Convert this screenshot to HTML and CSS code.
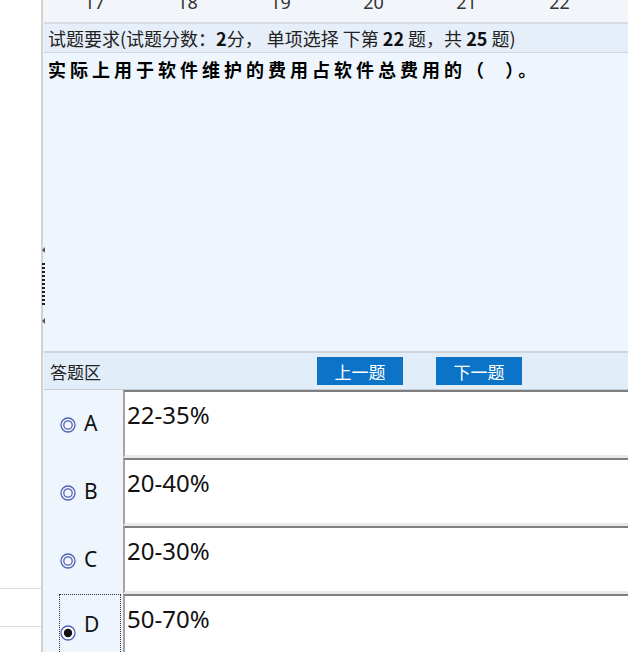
FILE: index.html
```html
<!DOCTYPE html>
<html>
<head>
<meta charset="utf-8">
<link rel="stylesheet" href="styles.css">
</head>
<body>
<div class="app">
  <div class="side">
    <div class="side-top"></div>
    <div class="side-row"></div>
    <div class="side-row"></div>
  </div>
  <div class="splitter">
    <span class="grip grip-up"></span>
    <span class="dots"></span>
    <span class="grip grip-down"></span>
  </div>
  <div class="main">
    <div class="nums">
      <span class="num">17</span><span class="num">18</span><span class="num">19</span><span class="num">20</span><span class="num">21</span><span class="num cur">22</span>
    </div>
    <div class="req">试题要求(试题分数：<b>2</b>分， 单项选择 下第 <b>22</b> 题，共 <b>25</b> 题)</div>
    <div class="question">实际上用于软件维护的费用占软件总费用的（&nbsp; ）。</div>
    <div class="ans-bar">
      <span class="ans-title">答题区</span>
      <button class="nav-btn">上一题</button>
      <button class="nav-btn">下一题</button>
    </div>
    <div class="options">
      <div class="opt">
        <div class="lab"><div class="lab-in">
          <svg class="radio" width="16" height="16" viewBox="0 0 16 16"><circle cx="8" cy="8" r="7" fill="#f4f6fc" stroke="#4f62b6" stroke-width="1.3"/><circle cx="8" cy="8" r="4.2" fill="none" stroke="#4f62b6" stroke-width="1.3"/></svg>
          <span class="letter">A</span></div></div>
        <div class="box">22-35%</div>
      </div>
      <div class="opt">
        <div class="lab"><div class="lab-in">
          <svg class="radio" width="16" height="16" viewBox="0 0 16 16"><circle cx="8" cy="8" r="7" fill="#f4f6fc" stroke="#4f62b6" stroke-width="1.3"/><circle cx="8" cy="8" r="4.2" fill="none" stroke="#4f62b6" stroke-width="1.3"/></svg>
          <span class="letter">B</span></div></div>
        <div class="box">20-40%</div>
      </div>
      <div class="opt">
        <div class="lab"><div class="lab-in">
          <svg class="radio" width="16" height="16" viewBox="0 0 16 16"><circle cx="8" cy="8" r="7" fill="#f4f6fc" stroke="#4f62b6" stroke-width="1.3"/><circle cx="8" cy="8" r="4.2" fill="none" stroke="#4f62b6" stroke-width="1.3"/></svg>
          <span class="letter">C</span></div></div>
        <div class="box">20-30%</div>
      </div>
      <div class="opt opt-last">
        <div class="lab"><div class="lab-in focus">
          <svg class="radio radio-on" width="16" height="16" viewBox="0 0 16 16"><circle cx="8" cy="8" r="7" fill="#fff" stroke="#4f62b6" stroke-width="1.3"/><circle cx="8" cy="8" r="4.2" fill="#111"/></svg>
          <span class="letter letter-on">D</span></div></div>
        <div class="box">50-70%</div>
      </div>
    </div>
  </div>
</div>
</body>
</html>
```

FILE: styles.css
```css
html, body {
  margin: 0;
  padding: 0;
  background: #ffffff;
}
body {
  width: 628px;
  height: 652px;
  overflow: hidden;
  font-family: "Noto Sans", "Noto Sans CJK SC", sans-serif;
  color: #111;
}
.app {
  display: flex;
  height: 652px;
}
.side {
  width: 41px;
  flex: none;
  display: flex;
  flex-direction: column;
  background: #fff;
}
.side-top {
  flex: none;
  height: 588px;
  border-bottom: 1px solid #dcdcdc;
}
.side-row {
  flex: none;
  height: 37px;
  border-bottom: 1px solid #dcdcdc;
}
.splitter {
  position: relative;
  width: 1px;
  flex: none;
  border-left: 2px solid #d2d2d2;
  background: #f4f4f4;
}
.grip {
  position: absolute;
  left: -1px;
  width: 0;
  height: 0;
  border-top: 3px solid transparent;
  border-bottom: 3px solid transparent;
  border-right: 3px solid #555;
}
.grip-up { top: 247px; }
.grip-down { top: 318px; }
.dots {
  position: absolute;
  left: -1px;
  top: 263px;
  width: 3px;
  height: 42px;
  background: repeating-linear-gradient(to bottom, #222 0 2px, transparent 2px 4px);
}
.main {
  flex: 1;
  display: flex;
  flex-direction: column;
  background: #eef5fd;
  min-width: 0;
}
.nums {
  height: 22px;
  padding-left: 4px;
  background: #f2f6fb;
  border-bottom: 2px solid #d8dde4;
  overflow: hidden;
  display: flex;
  flex: none;
}
.num {
  width: 93px;
  flex: none;
  text-align: center;
  font-size: 18px;
  line-height: 18px;
  margin-top: -7px;
  color: #333;
}
.req {
  height: 28px;
  line-height: 28px;
  padding-left: 4px;
  background: #e6eef9;
  border-bottom: 1px solid #cfd6df;
  color: #222;
  white-space: nowrap;
  flex: none;
  font-family: "Noto Sans CJK SC", sans-serif;
  font-size: 18px;
}
.req b {
  font-weight: bold;
  color: #111;
}
.question {
  height: 298px;
  padding: 6px 4px 0;
  box-sizing: border-box;
  font-size: 18px;
  font-weight: bold;
  letter-spacing: 4px;
  line-height: 22px;
  color: #000;
  flex: none;
  white-space: nowrap;
}
.ans-bar {
  height: 36px;
  border-top: 2px solid #d0d3d8;
  border-bottom: 1px solid #c6ccd4;
  background: #e2edfa;
  display: flex;
  align-items: center;
  flex: none;
}
.ans-title {
  width: 267px;
  padding-left: 6px;
  flex: none;
  font-size: 17px;
  color: #222;
}
.nav-btn {
  width: 86px;
  height: 28px;
  border: none;
  padding: 0;
  margin: 0 33px 0 0;
  background: #0b74c9;
  color: #fff;
  font-family: "Noto Sans CJK SC", sans-serif;
  font-size: 17px;
}
.options {
  display: flex;
  flex-direction: column;
}
.opt {
  height: 68px;
  display: flex;
  flex: none;
}
.opt-last {
  height: 76px;
}
.lab {
  width: 79px;
  flex: none;
  display: flex;
}
.lab-in {
  margin-left: 15px;
  width: 62px;
  box-sizing: border-box;
  border: 1px dotted transparent;
  display: flex;
  align-items: flex-start;
  gap: 8px;
}
.lab-in.focus {
  border-color: #333;
}
.radio {
  flex: none;
  margin-top: 26px;
}
.radio-on {
  margin-top: 30px;
}
.letter {
  font-size: 21px;
  line-height: 20px;
  margin-top: 22px;
  color: #111;
}
.letter-on {
  margin-top: 19px;
}
.box {
  flex: 1;
  background: #fff;
  border-top: 2px solid #7f7f7f;
  border-left: 2px solid #a3a3a3;
  border-bottom: 3px solid #e9e9e9;
  padding: 7px 2px 0;
  font-size: 24px;
  line-height: 32px;
  color: #111;
}
```
